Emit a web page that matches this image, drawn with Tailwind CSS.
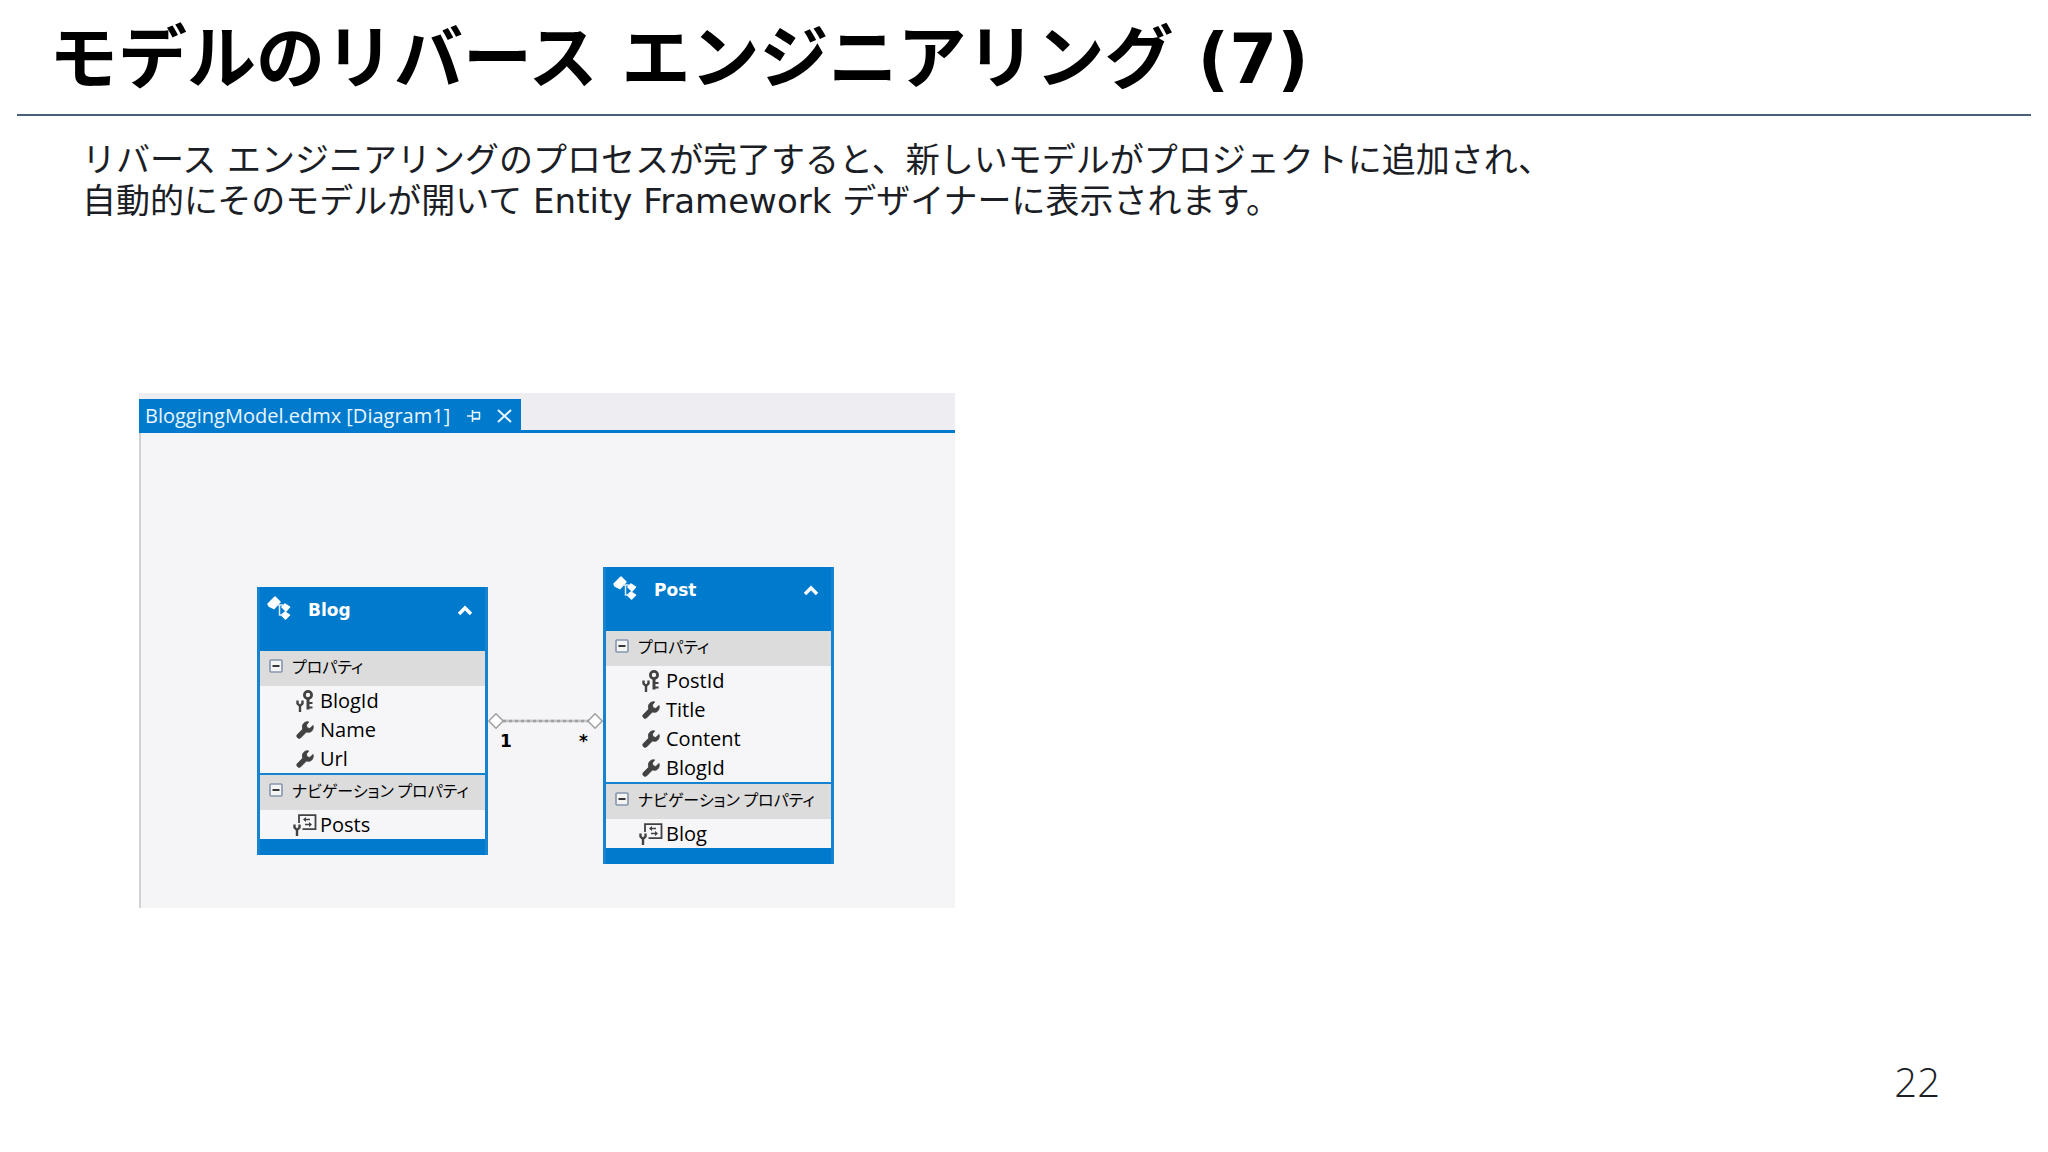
<!DOCTYPE html>
<html lang="ja">
<head>
<meta charset="utf-8">
<meta name="viewport" content="width=device-width, initial-scale=1">
<title>モデルのリバース エンジニアリング (7)</title>
<script src="https://cdn.jsdelivr.net/npm/@tailwindcss/browser@4"></script>
</head>
<body class="min-h-screen flex flex-col bg-white font-['DejaVu_Sans','Noto_Sans_CJK_JP',sans-serif] text-[#1c1e26]">
<svg class="hidden" aria-hidden="true">
  <symbol id="entity" viewBox="0 0 24 24">
    <path fill="#fff" stroke="#fff" stroke-width="1.500" stroke-linejoin="round" d="M1 8 8 1l5 5-6 6.500-5-2.500zM18 8l4.500 3-3.500 4-4-4zM18 16l4.500 3-4 4-4-4z"/>
    <path fill="none" stroke="#d8ecfa" stroke-width="1.500" d="M9 9h7M12.500 9v10h4"/>
  </symbol>
  <symbol id="chevron" viewBox="0 0 16 12"><path fill="none" stroke="#fff" stroke-width="3.400" d="M2 10 8 4l6 6"/></symbol>
  <symbol id="key" viewBox="0 0 18 22">
    <circle cx="12" cy="5" r="3.600" fill="none" stroke="#424242" stroke-width="2.800"/>
    <path fill="#424242" d="M10.500 9h3v10.500h-3zM13 12h3.500v2H13zM13 16.500h3.500v2H13z"/>
    <path fill="none" stroke="#424242" stroke-width="2.400" d="M1.500 10.500v3L4 16l2.500-2.500v-3M4 15.500V22"/>
  </symbol>
  <symbol id="wrench" viewBox="0 0 20 20">
    <path fill="#424242" stroke="#424242" stroke-linejoin="round" d="M14 1 11.500 4.500l.8 3 3 .8L19 5c.8 4-1.500 7.500-5 7.500-1.100 0-1.700-.1-2.400-.4L5 18.800c-2.200 1.600-5.200-1.200-3.700-3.500L7.500 9C6 4 9.500.2 14 1z"/>
  </symbol>
  <symbol id="nav" viewBox="0 0 24 22">
    <path fill="none" stroke="#424242" stroke-width="1.800" d="M6 9V1.200h16.500v14H9.500"/>
    <path fill="none" stroke="#424242" stroke-width="1.500" d="M11 5.500h6M12 10.500h6"/>
    <path fill="#424242" d="M10 5.500 13 3v5zM19 10.500 16 8v5z"/>
    <path fill="none" stroke="#424242" stroke-width="2.400" d="M1.500 10.500v3L4 16l2.500-2.500v-3M4 15.500V22"/>
  </symbol>
  <symbol id="minus" viewBox="0 0 14 14">
    <rect x="1" y="1" width="12" height="12" rx="1" fill="#f4f4f2" stroke="#8596ad" stroke-width="1.600"/>
    <path stroke="#222" stroke-width="1.800" d="M3.500 7h7"/>
  </symbol>
</svg>

<header class="mx-[17px] h-[116px] pl-[32px] pt-[4px] border-b-2 border-[#4a607a] flex items-center">
  <h1 class="text-[69px] leading-[90px] font-bold text-black whitespace-nowrap">モデルのリバース エンジニアリング (7)</h1>
</header>

<main class="flex-1 flex flex-col">
  <p class="pl-[82px] pt-[24px] text-[34px] leading-[41px]">リバース エンジニアリングのプロセスが完了すると、新しいモデルがプロジェクトに追加され、<br>自動的にそのモデルが開いて Entity Framework デザイナーに表示されます。</p>

  <section class="ml-[139px] mt-[171px] w-[816px] h-[515px] flex flex-col bg-[#f5f5f7] font-['Open_Sans',sans-serif]">
    <div class="h-[40px] pt-[6px] flex items-stretch bg-[#eeeef2] border-b-3 border-[#007acc]">
      <div class="w-[382px] pl-[6px] pt-[2px] flex items-center bg-[#007acc] text-[#e8f6ff]">
        <span class="w-[322px] text-[20px] leading-[28px] whitespace-nowrap">BloggingModel.edmx [Diagram1]</span>
        <button type="button" aria-label="ピン留め" class="w-[30px]"><svg class="w-[14px] h-[12px]" viewBox="0 0 14 12" fill="none" stroke="#e8f6ff" stroke-width="1.500"><path d="M0 6h5M5.500 0v12M5.500 2.500h7v6h-7M5.500 9h7.500"/></svg></button>
        <button type="button" aria-label="閉じる"><svg class="w-[16px] h-[14px]" viewBox="0 0 16 14" fill="none" stroke="#e8f6ff" stroke-width="2"><path d="M1 1l13 12M14 1 1 13"/></svg></button>
      </div>
    </div>
    <div class="flex-1 relative border-l-2 border-[#d2d2d6] text-black text-[20px]">

      <article class="absolute left-[116px] top-[154px] w-[231px] border-x-3 border-[#1583d0] bg-[#f6f6f8]">
        <div class="h-[64px] pt-[9px] pl-[7px] pr-[12px] flex items-start bg-[#007acc] text-white">
          <svg class="w-[24px] h-[24px]"><use href="#entity"/></svg>
          <h2 class="ml-[17px] flex-1 text-[17px] leading-[28px] font-bold font-['DejaVu_Sans',sans-serif]">Blog</h2>
          <button type="button" aria-label="折りたたむ" class="h-[28px]"><svg class="w-[16px] h-[12px]"><use href="#chevron"/></svg></button>
        </div>
        <div class="h-[35px] pl-[9px] pb-[6px] flex items-center gap-[9px] bg-[#dcdcdc]">
          <button type="button" aria-label="プロパティを閉じる"><svg class="w-[14px] h-[14px]"><use href="#minus"/></svg></button>
          <h3 class="text-[16px] leading-[28px] whitespace-nowrap font-['Noto_Sans_CJK_JP',sans-serif] [font-feature-settings:'palt']">プロパティ</h3>
        </div>
        <ul class="pl-[36px]">
          <li class="h-[29px] flex items-center gap-[6px]"><svg class="w-[18px] h-[22px]"><use href="#key"/></svg>BlogId</li>
          <li class="h-[29px] flex items-center gap-[6px]"><svg class="w-[18px] h-[18px]"><use href="#wrench"/></svg>Name</li>
          <li class="h-[29px] flex items-center gap-[6px]"><svg class="w-[18px] h-[18px]"><use href="#wrench"/></svg>Url</li>
        </ul>
        <div class="h-[37px] pl-[9px] pb-[6px] flex items-center gap-[9px] border-t-2 border-[#1583d0] bg-[#dcdcdc]">
          <button type="button" aria-label="ナビゲーション プロパティを閉じる"><svg class="w-[14px] h-[14px]"><use href="#minus"/></svg></button>
          <h3 class="text-[16px] leading-[28px] whitespace-nowrap font-['Noto_Sans_CJK_JP',sans-serif] [font-feature-settings:'palt']">ナビゲーション プロパティ</h3>
        </div>
        <ul class="pl-[33px]">
          <li class="h-[29px] flex items-center gap-[3px]"><svg class="w-[24px] h-[22px]"><use href="#nav"/></svg>Posts</li>
        </ul>
        <div class="h-[16px] bg-[#007acc]"></div>
      </article>

      <svg class="absolute left-[347px] top-[280px] w-[115px] h-[16px]" viewBox="0 0 115 16" fill="#fff" stroke="#a0a0a0" stroke-width="1.500">
        <path d="M15 8h86" stroke="#c4c4c6" stroke-width="2.500"/><path d="M15 8h86" stroke-width="2.500" stroke-dasharray="3 3"/>
        <path d="M.8 8 8 .8 15.200 8 8 15.200zM100 8 107 .8 114.200 8 107 15.200z"/>
      </svg>
      <span class="absolute left-[359px] top-[296px] text-[17px] leading-[24px] font-bold font-['DejaVu_Sans',sans-serif]">1</span>
      <span class="absolute left-[438px] top-[296px] text-[17px] leading-[24px] font-bold font-['DejaVu_Sans',sans-serif]">*</span>

      <article class="absolute left-[462px] top-[134px] w-[231px] border-x-3 border-[#1583d0] bg-[#f6f6f8]">
        <div class="h-[64px] pt-[9px] pl-[7px] pr-[12px] flex items-start bg-[#007acc] text-white">
          <svg class="w-[24px] h-[24px]"><use href="#entity"/></svg>
          <h2 class="ml-[17px] flex-1 text-[17px] leading-[28px] font-bold font-['DejaVu_Sans',sans-serif]">Post</h2>
          <button type="button" aria-label="折りたたむ" class="h-[28px]"><svg class="w-[16px] h-[12px]"><use href="#chevron"/></svg></button>
        </div>
        <div class="h-[35px] pl-[9px] pb-[6px] flex items-center gap-[9px] bg-[#dcdcdc]">
          <button type="button" aria-label="プロパティを閉じる"><svg class="w-[14px] h-[14px]"><use href="#minus"/></svg></button>
          <h3 class="text-[16px] leading-[28px] whitespace-nowrap font-['Noto_Sans_CJK_JP',sans-serif] [font-feature-settings:'palt']">プロパティ</h3>
        </div>
        <ul class="pl-[36px]">
          <li class="h-[29px] flex items-center gap-[6px]"><svg class="w-[18px] h-[22px]"><use href="#key"/></svg>PostId</li>
          <li class="h-[29px] flex items-center gap-[6px]"><svg class="w-[18px] h-[18px]"><use href="#wrench"/></svg>Title</li>
          <li class="h-[29px] flex items-center gap-[6px]"><svg class="w-[18px] h-[18px]"><use href="#wrench"/></svg>Content</li>
          <li class="h-[29px] flex items-center gap-[6px]"><svg class="w-[18px] h-[18px]"><use href="#wrench"/></svg>BlogId</li>
        </ul>
        <div class="h-[37px] pl-[9px] pb-[6px] flex items-center gap-[9px] border-t-2 border-[#1583d0] bg-[#dcdcdc]">
          <button type="button" aria-label="ナビゲーション プロパティを閉じる"><svg class="w-[14px] h-[14px]"><use href="#minus"/></svg></button>
          <h3 class="text-[16px] leading-[28px] whitespace-nowrap font-['Noto_Sans_CJK_JP',sans-serif] [font-feature-settings:'palt']">ナビゲーション プロパティ</h3>
        </div>
        <ul class="pl-[33px]">
          <li class="h-[29px] flex items-center gap-[3px]"><svg class="w-[24px] h-[22px]"><use href="#nav"/></svg>Blog</li>
        </ul>
        <div class="h-[16px] bg-[#007acc]"></div>
      </article>
    </div>
  </section>
</main>

<footer class="pr-[108px] pb-[42px] text-right text-[40px] leading-[56px] font-light font-['Open_Sans',sans-serif]">22</footer>
</body>
</html>
